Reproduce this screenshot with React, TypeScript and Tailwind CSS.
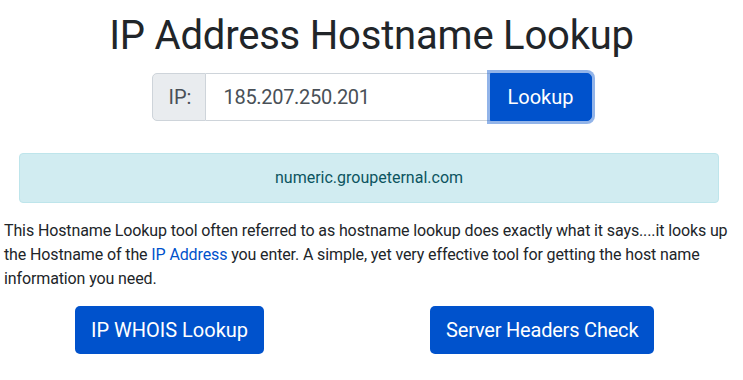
import React from 'react';

export default function App() {
  return (
    <div className="w-[743px] h-[380px] bg-white text-[#212529] font-['Segoe_UI',Roboto,'Liberation_Sans',sans-serif] overflow-hidden">
      <h1 className="text-center text-[40px] leading-[48px] pt-[12px] font-normal tracking-[-0.2px]">IP Address Hostname Lookup</h1>

      {/* Lookup form */}
      <div className="flex justify-center mt-[13px]">
        <div className="flex w-[440px] h-[48px] text-[20px]">
          <span className="flex items-center px-[16px] w-[54px] bg-[#e9ecef] border border-[#ced4da] rounded-l-[5px] text-[#495057]">IP:</span>
          <div className="flex items-center flex-1 border-y border-[#ced4da] pl-[18px] text-[#495057] tracking-[-0.3px]">185.207.250.201</div>
          <button className="w-[102px] bg-[#0052cc] text-white rounded-r-[5px] border border-[#0052cc] shadow-[0_0_0_3px_rgba(38,106,212,0.5)]">Lookup</button>
        </div>
      </div>

      <div className="ml-[19px] w-[700px] h-[50px] mt-[32px] flex items-center justify-center bg-[#d1ecf1] border border-[#bee5eb] rounded-[4px] text-[#0c5460] text-[16px]">
        numeric.groupeternal.com
      </div>

      <p className="mt-[16px] px-[4px] text-[16px] leading-[24px] tracking-[-0.12px]">
        This Hostname Lookup tool often referred to as hostname lookup does exactly what it says....it looks up the Hostname of the{' '}
        <a className="text-[#0052cc]">IP Address</a> you enter. A simple, yet very effective tool for getting the host name information you need.
      </p>

      <div className="flex mt-[15px] pl-[75px] gap-[166px]">
        <button className="h-[48px] px-[16px] bg-[#0052cc] text-white text-[20px] rounded-[5px]">IP WHOIS Lookup</button>
        <button className="h-[48px] px-[16px] bg-[#0052cc] text-white text-[20px] rounded-[5px] tracking-[-0.2px]">Server Headers Check</button>
      </div>
    </div>
  );
}
